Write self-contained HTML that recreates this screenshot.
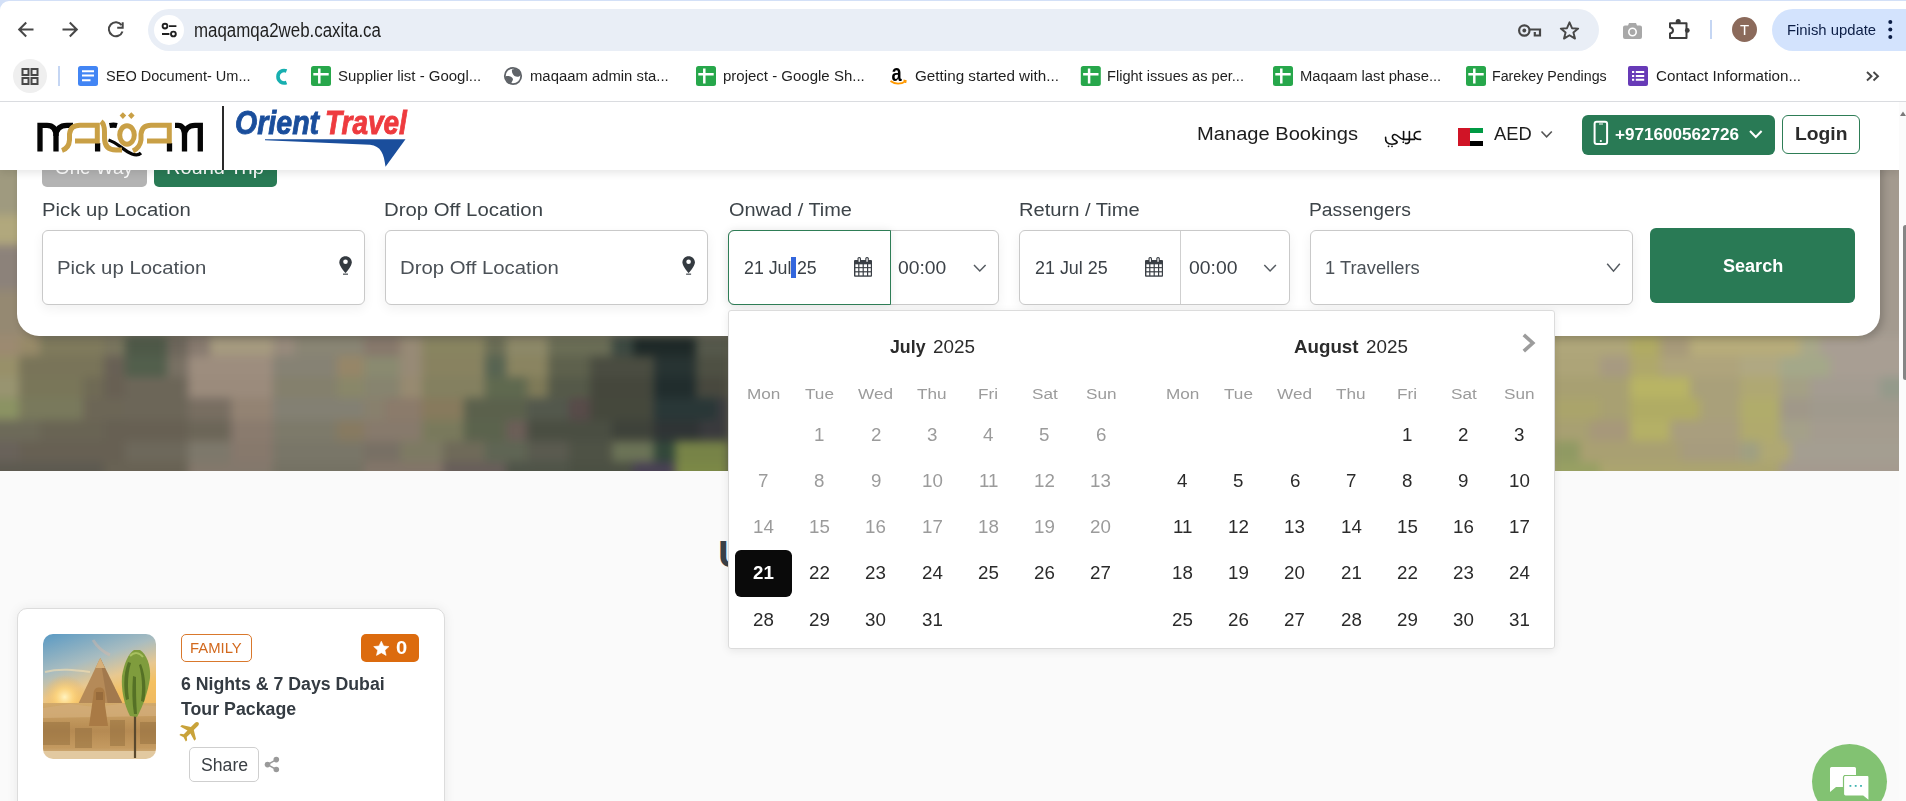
<!DOCTYPE html>
<html><head><meta charset="utf-8">
<style>
*{box-sizing:border-box;margin:0;padding:0}
html,body{width:1906px;height:801px;overflow:hidden;background:#fafafa;font-family:"Liberation Sans",sans-serif}
.a{position:absolute}
.t{position:absolute;line-height:0;white-space:nowrap;transform-origin:0 0;font-family:"Liberation Sans",sans-serif}
svg{position:absolute;overflow:visible}
</style></head><body>

<!-- ============ HERO IMAGE ============ -->
<div class="a" id="hero" style="left:0;top:102px;width:1899px;height:369px;overflow:hidden;background:#7d7560">
  <div class="a" style="left:0;top:0;width:1141px;height:369px;overflow:hidden">
  <div class="a" style="left:0;top:0;width:1899px;height:369px;filter:blur(5px) saturate(0.8)">
  <div class="a" style="left:-20px;top:0px;width:60px;height:113px;background:#a09a78"></div>
<div class="a" style="left:-20px;top:113px;width:60px;height:30px;background:#b4a872"></div>
<div class="a" style="left:-20px;top:143px;width:60px;height:45px;background:#8e8278"></div>
<div class="a" style="left:-20px;top:188px;width:60px;height:46px;background:#98896c"></div>
<div class="a" style="left:40px;top:0px;width:1101px;height:234px;background:#8a8470"></div>
<div class="a" style="left:1141px;top:0px;width:719px;height:234px;background:#b0a67a"></div>
<div class="a" style="left:1860px;top:0px;width:70px;height:234px;background:#a39a8e"></div>
<div class="a" style="left:-20px;top:234px;width:39px;height:20px;background:#a08a6a"></div>
<div class="a" style="left:19px;top:234px;width:21px;height:20px;background:#9a8a60"></div>
<div class="a" style="left:40px;top:234px;width:64px;height:20px;background:#807a55"></div>
<div class="a" style="left:104px;top:234px;width:21px;height:20px;background:#7a7558"></div>
<div class="a" style="left:125px;top:234px;width:42px;height:20px;background:#4c5a45"></div>
<div class="a" style="left:167px;top:234px;width:21px;height:20px;background:#6f6658"></div>
<div class="a" style="left:188px;top:234px;width:22px;height:20px;background:#8a7a6c"></div>
<div class="a" style="left:210px;top:234px;width:63px;height:20px;background:#a89a78"></div>
<div class="a" style="left:273px;top:234px;width:22px;height:20px;background:#9a8a78"></div>
<div class="a" style="left:295px;top:234px;width:69px;height:20px;background:#8a8570"></div>
<div class="a" style="left:364px;top:234px;width:36px;height:20px;background:#8a7868"></div>
<div class="a" style="left:400px;top:234px;width:22px;height:20px;background:#9a8a70"></div>
<div class="a" style="left:422px;top:234px;width:63px;height:20px;background:#8a8458"></div>
<div class="a" style="left:485px;top:234px;width:21px;height:20px;background:#6a6e50"></div>
<div class="a" style="left:506px;top:234px;width:42px;height:20px;background:#8e8860"></div>
<div class="a" style="left:548px;top:234px;width:64px;height:20px;background:#6a6e50"></div>
<div class="a" style="left:612px;top:234px;width:21px;height:20px;background:#3a4a40"></div>
<div class="a" style="left:633px;top:234px;width:63px;height:20px;background:#1c2a28"></div>
<div class="a" style="left:696px;top:234px;width:32px;height:20px;background:#555848"></div>
<div class="a" style="left:728px;top:234px;width:413px;height:20px;background:#5e5c4a"></div>
<div class="a" style="left:1141px;top:234px;width:413px;height:20px;background:#aaa274"></div>
<div class="a" style="left:1554px;top:234px;width:76px;height:20px;background:#b0a678"></div>
<div class="a" style="left:1630px;top:234px;width:30px;height:20px;background:#b0aa60"></div>
<div class="a" style="left:1660px;top:234px;width:30px;height:20px;background:#a89a78"></div>
<div class="a" style="left:1690px;top:234px;width:110px;height:20px;background:#b8ac78"></div>
<div class="a" style="left:1800px;top:234px;width:20px;height:20px;background:#a8a888"></div>
<div class="a" style="left:1820px;top:234px;width:110px;height:20px;background:#a89e92"></div>
<div class="a" style="left:-20px;top:254px;width:39px;height:21px;background:#9a9060"></div>
<div class="a" style="left:19px;top:254px;width:85px;height:21px;background:#7a7452"></div>
<div class="a" style="left:104px;top:254px;width:21px;height:21px;background:#6a6052"></div>
<div class="a" style="left:125px;top:254px;width:42px;height:21px;background:#506048"></div>
<div class="a" style="left:167px;top:254px;width:21px;height:21px;background:#7a7060"></div>
<div class="a" style="left:188px;top:254px;width:85px;height:21px;background:#a08c7a"></div>
<div class="a" style="left:273px;top:254px;width:64px;height:21px;background:#878270"></div>
<div class="a" style="left:337px;top:254px;width:27px;height:21px;background:#9a8660"></div>
<div class="a" style="left:364px;top:254px;width:36px;height:21px;background:#8a8a6a"></div>
<div class="a" style="left:400px;top:254px;width:22px;height:21px;background:#9a8a70"></div>
<div class="a" style="left:422px;top:254px;width:63px;height:21px;background:#8a8258"></div>
<div class="a" style="left:485px;top:254px;width:21px;height:21px;background:#55654e"></div>
<div class="a" style="left:506px;top:254px;width:42px;height:21px;background:#8c8458"></div>
<div class="a" style="left:548px;top:254px;width:42px;height:21px;background:#5e6248"></div>
<div class="a" style="left:590px;top:254px;width:64px;height:21px;background:#4a4c3e"></div>
<div class="a" style="left:654px;top:254px;width:42px;height:21px;background:#253432"></div>
<div class="a" style="left:696px;top:254px;width:32px;height:21px;background:#4e5040"></div>
<div class="a" style="left:728px;top:254px;width:413px;height:21px;background:#5e5c4a"></div>
<div class="a" style="left:1141px;top:254px;width:413px;height:21px;background:#aaa274"></div>
<div class="a" style="left:1554px;top:254px;width:46px;height:21px;background:#aea476"></div>
<div class="a" style="left:1600px;top:254px;width:30px;height:21px;background:#a89a80"></div>
<div class="a" style="left:1630px;top:254px;width:30px;height:21px;background:#b0a868"></div>
<div class="a" style="left:1660px;top:254px;width:80px;height:21px;background:#b0a47a"></div>
<div class="a" style="left:1740px;top:254px;width:40px;height:21px;background:#b0a880"></div>
<div class="a" style="left:1780px;top:254px;width:50px;height:21px;background:#a4a888"></div>
<div class="a" style="left:1830px;top:254px;width:100px;height:21px;background:#a89e92"></div>
<div class="a" style="left:-20px;top:275px;width:39px;height:21px;background:#9a9468"></div>
<div class="a" style="left:19px;top:275px;width:64px;height:21px;background:#7a7652"></div>
<div class="a" style="left:83px;top:275px;width:21px;height:21px;background:#706a50"></div>
<div class="a" style="left:104px;top:275px;width:21px;height:21px;background:#6a6050"></div>
<div class="a" style="left:125px;top:275px;width:63px;height:21px;background:#6e6655"></div>
<div class="a" style="left:188px;top:275px;width:85px;height:21px;background:#9e8a78"></div>
<div class="a" style="left:273px;top:275px;width:64px;height:21px;background:#858068"></div>
<div class="a" style="left:337px;top:275px;width:27px;height:21px;background:#8a8762"></div>
<div class="a" style="left:364px;top:275px;width:36px;height:21px;background:#88846a"></div>
<div class="a" style="left:400px;top:275px;width:22px;height:21px;background:#9a8a6a"></div>
<div class="a" style="left:422px;top:275px;width:63px;height:21px;background:#858058"></div>
<div class="a" style="left:485px;top:275px;width:42px;height:21px;background:#5e6a4a"></div>
<div class="a" style="left:527px;top:275px;width:21px;height:21px;background:#807a50"></div>
<div class="a" style="left:548px;top:275px;width:42px;height:21px;background:#555a45"></div>
<div class="a" style="left:590px;top:275px;width:64px;height:21px;background:#45473a"></div>
<div class="a" style="left:654px;top:275px;width:42px;height:21px;background:#1e2e2e"></div>
<div class="a" style="left:696px;top:275px;width:32px;height:21px;background:#48483c"></div>
<div class="a" style="left:728px;top:275px;width:413px;height:21px;background:#5e5c4a"></div>
<div class="a" style="left:1141px;top:275px;width:413px;height:21px;background:#aaa274"></div>
<div class="a" style="left:1554px;top:275px;width:76px;height:21px;background:#a8a070"></div>
<div class="a" style="left:1630px;top:275px;width:60px;height:21px;background:#b8b460"></div>
<div class="a" style="left:1690px;top:275px;width:50px;height:21px;background:#aaa078"></div>
<div class="a" style="left:1740px;top:275px;width:40px;height:21px;background:#b0a870"></div>
<div class="a" style="left:1780px;top:275px;width:30px;height:21px;background:#a4a084"></div>
<div class="a" style="left:1810px;top:275px;width:70px;height:21px;background:#a49c90"></div>
<div class="a" style="left:1880px;top:275px;width:50px;height:21px;background:#949a8a"></div>
<div class="a" style="left:-20px;top:296px;width:39px;height:22px;background:#8a9458"></div>
<div class="a" style="left:19px;top:296px;width:64px;height:22px;background:#7a7a55"></div>
<div class="a" style="left:83px;top:296px;width:42px;height:22px;background:#6e6652"></div>
<div class="a" style="left:125px;top:296px;width:63px;height:22px;background:#6e6655"></div>
<div class="a" style="left:188px;top:296px;width:43px;height:22px;background:#7a6e5e"></div>
<div class="a" style="left:231px;top:296px;width:42px;height:22px;background:#96826f"></div>
<div class="a" style="left:273px;top:296px;width:91px;height:22px;background:#848070"></div>
<div class="a" style="left:364px;top:296px;width:21px;height:22px;background:#8a8068"></div>
<div class="a" style="left:385px;top:296px;width:37px;height:22px;background:#8e7a66"></div>
<div class="a" style="left:422px;top:296px;width:42px;height:22px;background:#8a7a55"></div>
<div class="a" style="left:464px;top:296px;width:63px;height:22px;background:#5a6248"></div>
<div class="a" style="left:527px;top:296px;width:42px;height:22px;background:#52584a"></div>
<div class="a" style="left:569px;top:296px;width:21px;height:22px;background:#5a4a48"></div>
<div class="a" style="left:590px;top:296px;width:64px;height:22px;background:#45483a"></div>
<div class="a" style="left:654px;top:296px;width:63px;height:22px;background:#263838"></div>
<div class="a" style="left:717px;top:296px;width:11px;height:22px;background:#3a3a40"></div>
<div class="a" style="left:728px;top:296px;width:413px;height:22px;background:#5e5c4a"></div>
<div class="a" style="left:1141px;top:296px;width:413px;height:22px;background:#aaa274"></div>
<div class="a" style="left:1554px;top:296px;width:46px;height:22px;background:#aaa468"></div>
<div class="a" style="left:1600px;top:296px;width:30px;height:22px;background:#a8a070"></div>
<div class="a" style="left:1630px;top:296px;width:70px;height:22px;background:#b0ac60"></div>
<div class="a" style="left:1700px;top:296px;width:40px;height:22px;background:#aaa078"></div>
<div class="a" style="left:1740px;top:296px;width:40px;height:22px;background:#b0ac68"></div>
<div class="a" style="left:1780px;top:296px;width:30px;height:22px;background:#a09888"></div>
<div class="a" style="left:1810px;top:296px;width:120px;height:22px;background:#a09a8c"></div>
<div class="a" style="left:-20px;top:318px;width:60px;height:21px;background:#6e6a55"></div>
<div class="a" style="left:40px;top:318px;width:64px;height:21px;background:#6a6450"></div>
<div class="a" style="left:104px;top:318px;width:84px;height:21px;background:#686050"></div>
<div class="a" style="left:188px;top:318px;width:43px;height:21px;background:#6e6655"></div>
<div class="a" style="left:231px;top:318px;width:42px;height:21px;background:#8d7a6a"></div>
<div class="a" style="left:273px;top:318px;width:64px;height:21px;background:#7e7a66"></div>
<div class="a" style="left:337px;top:318px;width:27px;height:21px;background:#8a7a5a"></div>
<div class="a" style="left:364px;top:318px;width:58px;height:21px;background:#8a7a68"></div>
<div class="a" style="left:422px;top:318px;width:42px;height:21px;background:#7a7a55"></div>
<div class="a" style="left:464px;top:318px;width:42px;height:21px;background:#5a6448"></div>
<div class="a" style="left:506px;top:318px;width:21px;height:21px;background:#6e5e55"></div>
<div class="a" style="left:527px;top:318px;width:85px;height:21px;background:#4a4e40"></div>
<div class="a" style="left:612px;top:318px;width:42px;height:21px;background:#3e4238"></div>
<div class="a" style="left:654px;top:318px;width:46px;height:21px;background:#2e3436"></div>
<div class="a" style="left:700px;top:318px;width:28px;height:21px;background:#3a3a3e"></div>
<div class="a" style="left:728px;top:318px;width:413px;height:21px;background:#5e5c4a"></div>
<div class="a" style="left:1141px;top:318px;width:413px;height:21px;background:#aaa274"></div>
<div class="a" style="left:1554px;top:318px;width:36px;height:21px;background:#a8a070"></div>
<div class="a" style="left:1590px;top:318px;width:40px;height:21px;background:#a89878"></div>
<div class="a" style="left:1630px;top:318px;width:40px;height:21px;background:#b4b062"></div>
<div class="a" style="left:1670px;top:318px;width:70px;height:21px;background:#aa9e7c"></div>
<div class="a" style="left:1740px;top:318px;width:40px;height:21px;background:#b0aa6a"></div>
<div class="a" style="left:1780px;top:318px;width:30px;height:21px;background:#a4a088"></div>
<div class="a" style="left:1810px;top:318px;width:120px;height:21px;background:#a49c8e"></div>
<div class="a" style="left:-20px;top:339px;width:39px;height:21px;background:#6a6258"></div>
<div class="a" style="left:19px;top:339px;width:106px;height:21px;background:#686050"></div>
<div class="a" style="left:125px;top:339px;width:63px;height:21px;background:#6e6858"></div>
<div class="a" style="left:188px;top:339px;width:43px;height:21px;background:#7e7868"></div>
<div class="a" style="left:231px;top:339px;width:42px;height:21px;background:#8a7868"></div>
<div class="a" style="left:273px;top:339px;width:91px;height:21px;background:#7a7664"></div>
<div class="a" style="left:364px;top:339px;width:36px;height:21px;background:#7a7062"></div>
<div class="a" style="left:400px;top:339px;width:43px;height:21px;background:#7e7a5e"></div>
<div class="a" style="left:443px;top:339px;width:42px;height:21px;background:#706a55"></div>
<div class="a" style="left:485px;top:339px;width:42px;height:21px;background:#5e6650"></div>
<div class="a" style="left:527px;top:339px;width:42px;height:21px;background:#5a5a4c"></div>
<div class="a" style="left:569px;top:339px;width:43px;height:21px;background:#4e5242"></div>
<div class="a" style="left:612px;top:339px;width:42px;height:21px;background:#6a7450"></div>
<div class="a" style="left:654px;top:339px;width:21px;height:21px;background:#2e4838"></div>
<div class="a" style="left:675px;top:339px;width:53px;height:21px;background:#76853a"></div>
<div class="a" style="left:728px;top:339px;width:413px;height:21px;background:#5e5c4a"></div>
<div class="a" style="left:1141px;top:339px;width:413px;height:21px;background:#aaa274"></div>
<div class="a" style="left:1554px;top:339px;width:26px;height:21px;background:#909a60"></div>
<div class="a" style="left:1580px;top:339px;width:100px;height:21px;background:#aaa070"></div>
<div class="a" style="left:1680px;top:339px;width:60px;height:21px;background:#a89c7c"></div>
<div class="a" style="left:1740px;top:339px;width:20px;height:21px;background:#a0a080"></div>
<div class="a" style="left:1760px;top:339px;width:30px;height:21px;background:#b0a870"></div>
<div class="a" style="left:1790px;top:339px;width:140px;height:21px;background:#a49e90"></div>
<div class="a" style="left:-20px;top:360px;width:124px;height:38px;background:#5e5a4e"></div>
<div class="a" style="left:104px;top:360px;width:84px;height:38px;background:#6a6250"></div>
<div class="a" style="left:188px;top:360px;width:85px;height:38px;background:#857868"></div>
<div class="a" style="left:273px;top:360px;width:91px;height:38px;background:#767260"></div>
<div class="a" style="left:364px;top:360px;width:79px;height:38px;background:#857565"></div>
<div class="a" style="left:443px;top:360px;width:63px;height:38px;background:#6a5e58"></div>
<div class="a" style="left:506px;top:360px;width:63px;height:38px;background:#4e5446"></div>
<div class="a" style="left:569px;top:360px;width:64px;height:38px;background:#4a5040"></div>
<div class="a" style="left:633px;top:360px;width:42px;height:38px;background:#4a4058"></div>
<div class="a" style="left:675px;top:360px;width:53px;height:38px;background:#7a8a38"></div>
<div class="a" style="left:728px;top:360px;width:413px;height:38px;background:#5e5c4a"></div>
<div class="a" style="left:1141px;top:360px;width:413px;height:38px;background:#aaa274"></div>
<div class="a" style="left:1554px;top:360px;width:46px;height:38px;background:#98a060"></div>
<div class="a" style="left:1600px;top:360px;width:180px;height:38px;background:#aca46c"></div>
<div class="a" style="left:1780px;top:360px;width:150px;height:38px;background:#a49a8e"></div>
  </div></div>
  <div class="a" style="left:1141px;top:0;width:758px;height:369px;overflow:hidden">
  <div class="a" style="left:-1141px;top:0;width:1899px;height:369px;filter:blur(5px) saturate(0.95)">
  <div class="a" style="left:-20px;top:0px;width:60px;height:113px;background:#a09a78"></div>
<div class="a" style="left:-20px;top:113px;width:60px;height:30px;background:#b4a872"></div>
<div class="a" style="left:-20px;top:143px;width:60px;height:45px;background:#8e8278"></div>
<div class="a" style="left:-20px;top:188px;width:60px;height:46px;background:#98896c"></div>
<div class="a" style="left:40px;top:0px;width:1101px;height:234px;background:#8a8470"></div>
<div class="a" style="left:1141px;top:0px;width:719px;height:234px;background:#b0a67a"></div>
<div class="a" style="left:1860px;top:0px;width:70px;height:234px;background:#a39a8e"></div>
<div class="a" style="left:-20px;top:234px;width:39px;height:20px;background:#a08a6a"></div>
<div class="a" style="left:19px;top:234px;width:21px;height:20px;background:#9a8a60"></div>
<div class="a" style="left:40px;top:234px;width:64px;height:20px;background:#807a55"></div>
<div class="a" style="left:104px;top:234px;width:21px;height:20px;background:#7a7558"></div>
<div class="a" style="left:125px;top:234px;width:42px;height:20px;background:#4c5a45"></div>
<div class="a" style="left:167px;top:234px;width:21px;height:20px;background:#6f6658"></div>
<div class="a" style="left:188px;top:234px;width:22px;height:20px;background:#8a7a6c"></div>
<div class="a" style="left:210px;top:234px;width:63px;height:20px;background:#a89a78"></div>
<div class="a" style="left:273px;top:234px;width:22px;height:20px;background:#9a8a78"></div>
<div class="a" style="left:295px;top:234px;width:69px;height:20px;background:#8a8570"></div>
<div class="a" style="left:364px;top:234px;width:36px;height:20px;background:#8a7868"></div>
<div class="a" style="left:400px;top:234px;width:22px;height:20px;background:#9a8a70"></div>
<div class="a" style="left:422px;top:234px;width:63px;height:20px;background:#8a8458"></div>
<div class="a" style="left:485px;top:234px;width:21px;height:20px;background:#6a6e50"></div>
<div class="a" style="left:506px;top:234px;width:42px;height:20px;background:#8e8860"></div>
<div class="a" style="left:548px;top:234px;width:64px;height:20px;background:#6a6e50"></div>
<div class="a" style="left:612px;top:234px;width:21px;height:20px;background:#3a4a40"></div>
<div class="a" style="left:633px;top:234px;width:63px;height:20px;background:#1c2a28"></div>
<div class="a" style="left:696px;top:234px;width:32px;height:20px;background:#555848"></div>
<div class="a" style="left:728px;top:234px;width:413px;height:20px;background:#5e5c4a"></div>
<div class="a" style="left:1141px;top:234px;width:413px;height:20px;background:#aaa274"></div>
<div class="a" style="left:1554px;top:234px;width:76px;height:20px;background:#b0a678"></div>
<div class="a" style="left:1630px;top:234px;width:30px;height:20px;background:#b0aa60"></div>
<div class="a" style="left:1660px;top:234px;width:30px;height:20px;background:#a89a78"></div>
<div class="a" style="left:1690px;top:234px;width:110px;height:20px;background:#b8ac78"></div>
<div class="a" style="left:1800px;top:234px;width:20px;height:20px;background:#a8a888"></div>
<div class="a" style="left:1820px;top:234px;width:110px;height:20px;background:#a89e92"></div>
<div class="a" style="left:-20px;top:254px;width:39px;height:21px;background:#9a9060"></div>
<div class="a" style="left:19px;top:254px;width:85px;height:21px;background:#7a7452"></div>
<div class="a" style="left:104px;top:254px;width:21px;height:21px;background:#6a6052"></div>
<div class="a" style="left:125px;top:254px;width:42px;height:21px;background:#506048"></div>
<div class="a" style="left:167px;top:254px;width:21px;height:21px;background:#7a7060"></div>
<div class="a" style="left:188px;top:254px;width:85px;height:21px;background:#a08c7a"></div>
<div class="a" style="left:273px;top:254px;width:64px;height:21px;background:#878270"></div>
<div class="a" style="left:337px;top:254px;width:27px;height:21px;background:#9a8660"></div>
<div class="a" style="left:364px;top:254px;width:36px;height:21px;background:#8a8a6a"></div>
<div class="a" style="left:400px;top:254px;width:22px;height:21px;background:#9a8a70"></div>
<div class="a" style="left:422px;top:254px;width:63px;height:21px;background:#8a8258"></div>
<div class="a" style="left:485px;top:254px;width:21px;height:21px;background:#55654e"></div>
<div class="a" style="left:506px;top:254px;width:42px;height:21px;background:#8c8458"></div>
<div class="a" style="left:548px;top:254px;width:42px;height:21px;background:#5e6248"></div>
<div class="a" style="left:590px;top:254px;width:64px;height:21px;background:#4a4c3e"></div>
<div class="a" style="left:654px;top:254px;width:42px;height:21px;background:#253432"></div>
<div class="a" style="left:696px;top:254px;width:32px;height:21px;background:#4e5040"></div>
<div class="a" style="left:728px;top:254px;width:413px;height:21px;background:#5e5c4a"></div>
<div class="a" style="left:1141px;top:254px;width:413px;height:21px;background:#aaa274"></div>
<div class="a" style="left:1554px;top:254px;width:46px;height:21px;background:#aea476"></div>
<div class="a" style="left:1600px;top:254px;width:30px;height:21px;background:#a89a80"></div>
<div class="a" style="left:1630px;top:254px;width:30px;height:21px;background:#b0a868"></div>
<div class="a" style="left:1660px;top:254px;width:80px;height:21px;background:#b0a47a"></div>
<div class="a" style="left:1740px;top:254px;width:40px;height:21px;background:#b0a880"></div>
<div class="a" style="left:1780px;top:254px;width:50px;height:21px;background:#a4a888"></div>
<div class="a" style="left:1830px;top:254px;width:100px;height:21px;background:#a89e92"></div>
<div class="a" style="left:-20px;top:275px;width:39px;height:21px;background:#9a9468"></div>
<div class="a" style="left:19px;top:275px;width:64px;height:21px;background:#7a7652"></div>
<div class="a" style="left:83px;top:275px;width:21px;height:21px;background:#706a50"></div>
<div class="a" style="left:104px;top:275px;width:21px;height:21px;background:#6a6050"></div>
<div class="a" style="left:125px;top:275px;width:63px;height:21px;background:#6e6655"></div>
<div class="a" style="left:188px;top:275px;width:85px;height:21px;background:#9e8a78"></div>
<div class="a" style="left:273px;top:275px;width:64px;height:21px;background:#858068"></div>
<div class="a" style="left:337px;top:275px;width:27px;height:21px;background:#8a8762"></div>
<div class="a" style="left:364px;top:275px;width:36px;height:21px;background:#88846a"></div>
<div class="a" style="left:400px;top:275px;width:22px;height:21px;background:#9a8a6a"></div>
<div class="a" style="left:422px;top:275px;width:63px;height:21px;background:#858058"></div>
<div class="a" style="left:485px;top:275px;width:42px;height:21px;background:#5e6a4a"></div>
<div class="a" style="left:527px;top:275px;width:21px;height:21px;background:#807a50"></div>
<div class="a" style="left:548px;top:275px;width:42px;height:21px;background:#555a45"></div>
<div class="a" style="left:590px;top:275px;width:64px;height:21px;background:#45473a"></div>
<div class="a" style="left:654px;top:275px;width:42px;height:21px;background:#1e2e2e"></div>
<div class="a" style="left:696px;top:275px;width:32px;height:21px;background:#48483c"></div>
<div class="a" style="left:728px;top:275px;width:413px;height:21px;background:#5e5c4a"></div>
<div class="a" style="left:1141px;top:275px;width:413px;height:21px;background:#aaa274"></div>
<div class="a" style="left:1554px;top:275px;width:76px;height:21px;background:#a8a070"></div>
<div class="a" style="left:1630px;top:275px;width:60px;height:21px;background:#b8b460"></div>
<div class="a" style="left:1690px;top:275px;width:50px;height:21px;background:#aaa078"></div>
<div class="a" style="left:1740px;top:275px;width:40px;height:21px;background:#b0a870"></div>
<div class="a" style="left:1780px;top:275px;width:30px;height:21px;background:#a4a084"></div>
<div class="a" style="left:1810px;top:275px;width:70px;height:21px;background:#a49c90"></div>
<div class="a" style="left:1880px;top:275px;width:50px;height:21px;background:#949a8a"></div>
<div class="a" style="left:-20px;top:296px;width:39px;height:22px;background:#8a9458"></div>
<div class="a" style="left:19px;top:296px;width:64px;height:22px;background:#7a7a55"></div>
<div class="a" style="left:83px;top:296px;width:42px;height:22px;background:#6e6652"></div>
<div class="a" style="left:125px;top:296px;width:63px;height:22px;background:#6e6655"></div>
<div class="a" style="left:188px;top:296px;width:43px;height:22px;background:#7a6e5e"></div>
<div class="a" style="left:231px;top:296px;width:42px;height:22px;background:#96826f"></div>
<div class="a" style="left:273px;top:296px;width:91px;height:22px;background:#848070"></div>
<div class="a" style="left:364px;top:296px;width:21px;height:22px;background:#8a8068"></div>
<div class="a" style="left:385px;top:296px;width:37px;height:22px;background:#8e7a66"></div>
<div class="a" style="left:422px;top:296px;width:42px;height:22px;background:#8a7a55"></div>
<div class="a" style="left:464px;top:296px;width:63px;height:22px;background:#5a6248"></div>
<div class="a" style="left:527px;top:296px;width:42px;height:22px;background:#52584a"></div>
<div class="a" style="left:569px;top:296px;width:21px;height:22px;background:#5a4a48"></div>
<div class="a" style="left:590px;top:296px;width:64px;height:22px;background:#45483a"></div>
<div class="a" style="left:654px;top:296px;width:63px;height:22px;background:#263838"></div>
<div class="a" style="left:717px;top:296px;width:11px;height:22px;background:#3a3a40"></div>
<div class="a" style="left:728px;top:296px;width:413px;height:22px;background:#5e5c4a"></div>
<div class="a" style="left:1141px;top:296px;width:413px;height:22px;background:#aaa274"></div>
<div class="a" style="left:1554px;top:296px;width:46px;height:22px;background:#aaa468"></div>
<div class="a" style="left:1600px;top:296px;width:30px;height:22px;background:#a8a070"></div>
<div class="a" style="left:1630px;top:296px;width:70px;height:22px;background:#b0ac60"></div>
<div class="a" style="left:1700px;top:296px;width:40px;height:22px;background:#aaa078"></div>
<div class="a" style="left:1740px;top:296px;width:40px;height:22px;background:#b0ac68"></div>
<div class="a" style="left:1780px;top:296px;width:30px;height:22px;background:#a09888"></div>
<div class="a" style="left:1810px;top:296px;width:120px;height:22px;background:#a09a8c"></div>
<div class="a" style="left:-20px;top:318px;width:60px;height:21px;background:#6e6a55"></div>
<div class="a" style="left:40px;top:318px;width:64px;height:21px;background:#6a6450"></div>
<div class="a" style="left:104px;top:318px;width:84px;height:21px;background:#686050"></div>
<div class="a" style="left:188px;top:318px;width:43px;height:21px;background:#6e6655"></div>
<div class="a" style="left:231px;top:318px;width:42px;height:21px;background:#8d7a6a"></div>
<div class="a" style="left:273px;top:318px;width:64px;height:21px;background:#7e7a66"></div>
<div class="a" style="left:337px;top:318px;width:27px;height:21px;background:#8a7a5a"></div>
<div class="a" style="left:364px;top:318px;width:58px;height:21px;background:#8a7a68"></div>
<div class="a" style="left:422px;top:318px;width:42px;height:21px;background:#7a7a55"></div>
<div class="a" style="left:464px;top:318px;width:42px;height:21px;background:#5a6448"></div>
<div class="a" style="left:506px;top:318px;width:21px;height:21px;background:#6e5e55"></div>
<div class="a" style="left:527px;top:318px;width:85px;height:21px;background:#4a4e40"></div>
<div class="a" style="left:612px;top:318px;width:42px;height:21px;background:#3e4238"></div>
<div class="a" style="left:654px;top:318px;width:46px;height:21px;background:#2e3436"></div>
<div class="a" style="left:700px;top:318px;width:28px;height:21px;background:#3a3a3e"></div>
<div class="a" style="left:728px;top:318px;width:413px;height:21px;background:#5e5c4a"></div>
<div class="a" style="left:1141px;top:318px;width:413px;height:21px;background:#aaa274"></div>
<div class="a" style="left:1554px;top:318px;width:36px;height:21px;background:#a8a070"></div>
<div class="a" style="left:1590px;top:318px;width:40px;height:21px;background:#a89878"></div>
<div class="a" style="left:1630px;top:318px;width:40px;height:21px;background:#b4b062"></div>
<div class="a" style="left:1670px;top:318px;width:70px;height:21px;background:#aa9e7c"></div>
<div class="a" style="left:1740px;top:318px;width:40px;height:21px;background:#b0aa6a"></div>
<div class="a" style="left:1780px;top:318px;width:30px;height:21px;background:#a4a088"></div>
<div class="a" style="left:1810px;top:318px;width:120px;height:21px;background:#a49c8e"></div>
<div class="a" style="left:-20px;top:339px;width:39px;height:21px;background:#6a6258"></div>
<div class="a" style="left:19px;top:339px;width:106px;height:21px;background:#686050"></div>
<div class="a" style="left:125px;top:339px;width:63px;height:21px;background:#6e6858"></div>
<div class="a" style="left:188px;top:339px;width:43px;height:21px;background:#7e7868"></div>
<div class="a" style="left:231px;top:339px;width:42px;height:21px;background:#8a7868"></div>
<div class="a" style="left:273px;top:339px;width:91px;height:21px;background:#7a7664"></div>
<div class="a" style="left:364px;top:339px;width:36px;height:21px;background:#7a7062"></div>
<div class="a" style="left:400px;top:339px;width:43px;height:21px;background:#7e7a5e"></div>
<div class="a" style="left:443px;top:339px;width:42px;height:21px;background:#706a55"></div>
<div class="a" style="left:485px;top:339px;width:42px;height:21px;background:#5e6650"></div>
<div class="a" style="left:527px;top:339px;width:42px;height:21px;background:#5a5a4c"></div>
<div class="a" style="left:569px;top:339px;width:43px;height:21px;background:#4e5242"></div>
<div class="a" style="left:612px;top:339px;width:42px;height:21px;background:#6a7450"></div>
<div class="a" style="left:654px;top:339px;width:21px;height:21px;background:#2e4838"></div>
<div class="a" style="left:675px;top:339px;width:53px;height:21px;background:#76853a"></div>
<div class="a" style="left:728px;top:339px;width:413px;height:21px;background:#5e5c4a"></div>
<div class="a" style="left:1141px;top:339px;width:413px;height:21px;background:#aaa274"></div>
<div class="a" style="left:1554px;top:339px;width:26px;height:21px;background:#909a60"></div>
<div class="a" style="left:1580px;top:339px;width:100px;height:21px;background:#aaa070"></div>
<div class="a" style="left:1680px;top:339px;width:60px;height:21px;background:#a89c7c"></div>
<div class="a" style="left:1740px;top:339px;width:20px;height:21px;background:#a0a080"></div>
<div class="a" style="left:1760px;top:339px;width:30px;height:21px;background:#b0a870"></div>
<div class="a" style="left:1790px;top:339px;width:140px;height:21px;background:#a49e90"></div>
<div class="a" style="left:-20px;top:360px;width:124px;height:38px;background:#5e5a4e"></div>
<div class="a" style="left:104px;top:360px;width:84px;height:38px;background:#6a6250"></div>
<div class="a" style="left:188px;top:360px;width:85px;height:38px;background:#857868"></div>
<div class="a" style="left:273px;top:360px;width:91px;height:38px;background:#767260"></div>
<div class="a" style="left:364px;top:360px;width:79px;height:38px;background:#857565"></div>
<div class="a" style="left:443px;top:360px;width:63px;height:38px;background:#6a5e58"></div>
<div class="a" style="left:506px;top:360px;width:63px;height:38px;background:#4e5446"></div>
<div class="a" style="left:569px;top:360px;width:64px;height:38px;background:#4a5040"></div>
<div class="a" style="left:633px;top:360px;width:42px;height:38px;background:#4a4058"></div>
<div class="a" style="left:675px;top:360px;width:53px;height:38px;background:#7a8a38"></div>
<div class="a" style="left:728px;top:360px;width:413px;height:38px;background:#5e5c4a"></div>
<div class="a" style="left:1141px;top:360px;width:413px;height:38px;background:#aaa274"></div>
<div class="a" style="left:1554px;top:360px;width:46px;height:38px;background:#98a060"></div>
<div class="a" style="left:1600px;top:360px;width:180px;height:38px;background:#aca46c"></div>
<div class="a" style="left:1780px;top:360px;width:150px;height:38px;background:#a49a8e"></div>
  </div></div>
</div>

<!-- search card -->
<div class="a" style="left:17px;top:120px;width:1863px;height:216px;background:#fff;border-radius:0 0 22px 22px;box-shadow:3px 3px 8px rgba(0,0,0,.2)"></div>

<!-- one way / round trip -->
<div class="a" style="left:42px;top:150px;width:105px;height:37px;background:#b3b3b3;border-radius:5px"></div>
<div class="a" style="left:154px;top:150px;width:123px;height:37px;background:#297a55;border-radius:5px"></div>
<div class="t" style="left:55.20px;top:167.96px;font-size:18px;font-weight:400;color:#ffffff;transform:scaleX(1.0463);">One Way</div>
<div class="t" style="left:165.89px;top:167.96px;font-size:18px;font-weight:400;color:#ffffff;transform:scaleX(1.1103);">Round Trip</div>

<!-- inputs -->
<div class="a" style="left:42px;top:230px;width:323px;height:75px;border:1px solid #c9c9c9;border-radius:6px;background:#fff;box-shadow:0 4px 12px rgba(0,0,0,.06)"></div>
<div class="a" style="left:385px;top:230px;width:323px;height:75px;border:1px solid #c9c9c9;border-radius:6px;background:#fff;box-shadow:0 4px 12px rgba(0,0,0,.06)"></div>
<div class="a" style="left:728px;top:230px;width:271px;height:75px;border:1px solid #c9c9c9;border-radius:6px;background:#fff;box-shadow:0 4px 12px rgba(0,0,0,.06)"></div>
<div class="a" style="left:728px;top:230px;width:163px;height:75px;border:1px solid #2e7d56;border-radius:6px 0 0 6px;box-shadow:0 0 10px rgba(0,0,0,.08)"></div>
<div class="a" style="left:1019px;top:230px;width:271px;height:75px;border:1px solid #c9c9c9;border-radius:6px;background:#fff;box-shadow:0 4px 12px rgba(0,0,0,.06)"></div>
<div class="a" style="left:1180px;top:231px;width:1px;height:73px;background:#cfcfcf"></div>
<div class="a" style="left:1310px;top:230px;width:323px;height:75px;border:1px solid #c9c9c9;border-radius:6px;background:#fff;box-shadow:0 4px 12px rgba(0,0,0,.06)"></div>
<div class="a" style="left:1650px;top:228px;width:205px;height:75px;background:#297a55;border-radius:6px"></div>
<!-- cursor selection -->
<div class="a" style="left:791px;top:257px;width:5px;height:21px;background:#3366dd"></div>

<!-- ============ SITE HEADER ============ -->
<div class="a" style="left:0;top:102px;width:1899px;height:68px;background:#fff;box-shadow:0 3px 8px rgba(0,0,0,.10)"></div>
<div class="a" style="left:222px;top:106px;width:2px;height:64px;background:#2a2a2a"></div>
<div class="a" style="left:1582px;top:115px;width:193px;height:40px;background:#297a55;border-radius:6px"></div>
<div class="a" style="left:1782px;top:115px;width:78px;height:39px;border:1.5px solid #2e7d56;border-radius:6px;background:#fff"></div>
<!-- flag -->
<div class="a" style="left:1458px;top:128px;width:12px;height:18px;background:#d01426"></div>
<div class="a" style="left:1470px;top:128px;width:13px;height:5px;background:#009a44"></div>
<div class="a" style="left:1470px;top:141px;width:13px;height:5px;background:#000"></div>

<!-- ============ LOWER CONTENT ============ -->
<div class="a" style="left:17px;top:608px;width:428px;height:220px;border:1px solid #dcdcdc;border-radius:10px;background:#fff;box-shadow:0 0 12px rgba(0,0,0,.07)"></div>
<div class="a" style="left:181px;top:634px;width:71px;height:28px;border:1.5px solid #d9782c;border-radius:5px"></div>
<div class="a" style="left:361px;top:634px;width:58px;height:28px;background:#dc6b0e;border-radius:5px"></div>
<div class="a" style="left:189px;top:747px;width:70px;height:35px;border:1px solid #cfcfcf;border-radius:5px;background:#fff"></div>


<div class="t" style="left:718.27px;top:555.03px;font-size:36px;font-weight:700;color:#3a4147;transform:scaleX(1.1136);">U</div>
<!-- ============ CALENDAR ============ -->
<div class="a" style="left:728px;top:310px;width:827px;height:339px;background:#fff;border:1px solid #dcdcdc;border-radius:3px;box-shadow:0 2px 8px rgba(0,0,0,.08)"></div>
<div class="a" style="left:735px;top:550px;width:57px;height:47px;background:#0a0a0a;border-radius:6px"></div>

<!-- chat -->
<div class="a" style="left:1812px;top:744px;width:75px;height:75px;border-radius:50%;background:#82c272"></div>

<!-- ============ SCROLLBAR ============ -->
<div class="a" style="left:1899px;top:102px;width:7px;height:699px;background:#fbfbfb"></div>
<div class="a" style="left:1903px;top:225px;width:5px;height:155px;background:#858585;border-radius:3px"></div>

<!-- ============ CHROME TOP ============ -->
<div class="a" style="left:0;top:0;width:1906px;height:101px;background:#d3e0f7"></div>
<div class="a" style="left:0;top:1px;width:1906px;height:100px;background:#fff;border-radius:9px 0 0 0"></div>
<div class="a" style="left:0;top:0;width:1035px;height:1px;background:#d3e0f7"></div>
<div class="a" style="left:1252px;top:0;width:654px;height:1px;background:#d3e0f7"></div>
<div class="a" style="left:0;top:101px;width:1906px;height:1px;background:#dadce0"></div>
<div class="a" style="left:148px;top:9px;width:1451px;height:42px;background:#e9eef6;border-radius:21px"></div>
<div class="a" style="left:154px;top:15px;width:30px;height:30px;background:#fff;border-radius:50%"></div>
<div class="a" style="left:1772px;top:8.5px;width:160px;height:42px;background:#d3e3fd;border-radius:21px"></div>
<div class="a" style="left:13px;top:59px;width:34px;height:34px;background:#efefef;border-radius:50%"></div>
<div class="a" style="left:1732px;top:17px;width:25px;height:25px;background:#8b6a5b;border-radius:50%"></div>
<div class="a" style="left:1709.5px;top:20px;width:2px;height:19px;background:#c5d6f3"></div>
<div class="a" style="left:58px;top:66px;width:2px;height:20px;background:#c5d6f3"></div>

<svg width="1906" height="801" viewBox="0 0 1906 801" style="left:0;top:0;pointer-events:none">
<g fill="none" stroke="#474747" stroke-width="2" stroke-linecap="square">
  <path d="M32.5 29.5H19.5M25.5 23.2L19.2 29.5L25.5 35.8"/>
  <path d="M63.5 29.5H76.5M70.5 23.2L76.8 29.5L70.5 35.8"/>
  <path d="M121.6 25.2A7 7 0 1 0 122.5 31.5" stroke-linecap="butt"/>
  <path d="M122.7 22.2V27.8H117.2" stroke-linecap="butt"/>
</g>
<g fill="none" stroke="#1f1f1f" stroke-width="1.9">
  <circle cx="165" cy="26.1" r="2.4"/><path d="M169 26.1H176.4M162 34H169.4"/><circle cx="173.4" cy="34" r="2.4"/>
</g>
<g fill="none" stroke="#474747" stroke-width="2">
  <rect x="22.5" y="69" width="6" height="6"/><rect x="31.5" y="69" width="6" height="6"/>
  <rect x="22.5" y="78" width="6" height="6"/><rect x="31.5" y="78" width="6" height="6"/>
</g>
<!-- docs -->
<rect x="78" y="66" width="20" height="20" rx="2.5" fill="#4285f4"/>
<path d="M82 71.2H94M82 75.6H94M82 80.2H90.5" stroke="#fff" stroke-width="2"/>
<!-- C -->
<path d="M286.5 71A6.2 6.2 0 1 0 286.5 82.5" fill="none" stroke="#17afb0" stroke-width="3.6"/>
<!-- sheets -->
<g id="sh"><rect x="311" y="66" width="20" height="20" rx="2.5" fill="#27a74b"/><path d="M319.3 68.5V83.6M313.3 74.2H328.7" stroke="#fff" stroke-width="2.5"/></g>
<use href="#sh" x="385"/><use href="#sh" x="769.8"/><use href="#sh" x="962"/><use href="#sh" x="1155"/>
<!-- globe -->
<circle cx="513" cy="76" r="8.2" fill="none" stroke="#5f6368" stroke-width="1.8"/>
<path d="M512 69.5C515 68 520 69.5 521 74C520 77 517 77.5 514.5 76C513 74.5 511.5 72.5 512 69.5Z M505.5 76.5C508 75.5 512 76.5 513 79C513 81 511 82 511.5 84C508 83.5 505.5 80 505.5 76.5Z" fill="#5f6368"/>
<!-- amazon -->
<text x="0" y="0" transform="translate(891.6 80.6) scale(0.78 1)" font-family="Liberation Sans" font-weight="700" font-size="23.5" fill="#000">a</text>
<path d="M890.5 81C895 84.5 901 84.5 905.5 81.2" fill="none" stroke="#ff9900" stroke-width="1.8"/>
<path d="M903.5 80.2L906 80.8L905.6 83" fill="none" stroke="#ff9900" stroke-width="1.3"/>
<!-- forms -->
<rect x="1628" y="66" width="20" height="20" rx="2" fill="#673ab7"/>
<path d="M1632 72H1634.2M1632 76H1634.2M1632 79.8H1634.2M1635.8 72H1644.2M1635.8 76H1644.2M1635.8 79.8H1644.2" stroke="#fff" stroke-width="2.1"/>
<!-- chevrons >> -->
<path d="M1867 72L1871.5 76.2L1867 80.5M1873.5 72L1878 76.2L1873.5 80.5" fill="none" stroke="#474747" stroke-width="1.9"/>
<!-- key -->
<g fill="none" stroke="#474747" stroke-width="2.2">
 <circle cx="1524.3" cy="30.5" r="5.2"/>
 <path d="M1529.5 29.5H1540V35.5H1534.8V32"/>
</g>
<circle cx="1524.3" cy="30.5" r="1.9" fill="#474747"/>
<!-- star -->
<path d="M1569.5 22.3L1572 28.2L1578.2 28.6L1573.4 32.6L1575 38.6L1569.5 35.2L1564 38.6L1565.6 32.6L1560.8 28.6L1567 28.2Z" fill="none" stroke="#474747" stroke-width="1.9" stroke-linejoin="round"/>
<!-- camera -->
<path d="M1625 25.5H1628L1629 23H1636L1637 25.5H1640A2 2 0 0 1 1642 27.5V37A2 2 0 0 1 1640 39H1625A2 2 0 0 1 1623 37V27.5A2 2 0 0 1 1625 25.5Z" fill="#a8a8a8"/>
<circle cx="1632.5" cy="32" r="3.7" fill="none" stroke="#fff" stroke-width="1.6"/>
<!-- puzzle -->
<path d="M1670 23.2H1686.5V38H1670V33.5C1672 33 1673 32 1673 30.4C1673 28.8 1672 27.8 1670 27.3Z" fill="none" stroke="#3c3c3c" stroke-width="2" stroke-linejoin="round"/><circle cx="1678.2" cy="21.4" r="2.5" fill="#3c3c3c"/><circle cx="1687.3" cy="30.4" r="2.4" fill="#3c3c3c"/>
<!-- kebab -->
<circle cx="1890.3" cy="22" r="2" fill="#0b1d45"/><circle cx="1890.3" cy="29.6" r="2" fill="#0b1d45"/><circle cx="1890.3" cy="37" r="2" fill="#0b1d45"/>
<text x="1744.5" y="35" text-anchor="middle" font-family="Liberation Sans" font-size="15" fill="#fff">T</text>

<!-- ===== maqam logo ===== -->
<g fill="none" stroke="#050505" stroke-width="5.3">
  <path d="M40 151.5V125.3H47C53 125.3 56 129 56 136V151.5"/>
  <path d="M56 136C56 129 60 125.3 67 125.3H73"/>
  <path d="M97.6 143V151.5"/>
  <path d="M169.5 143V151.5"/>
  <path d="M109.5 125.5C112 125 115 125 117 125.5"/>
  <path d="M175 125.3H178C183 125.3 184.5 130 184.5 136V151.5M184.5 136C184.5 129 189 125.3 195 125.3H200.3V151.5"/>
</g>
<path d="M108.5 140C118 143 124 151 132 154C136 155.5 139 155 141 153" fill="none" stroke="#050505" stroke-width="3.2"/>
<g fill="none" stroke="#c9a046" stroke-width="5">
  <path d="M62 150.5Q69 148 69.5 140V134Q70.5 125.3 80 125.3H97.3V141H75"/>
  <path d="M101 121.5Q104.5 124 104.5 132V138Q104.5 150 116 150H122"/>
  <ellipse cx="127" cy="135" rx="7.3" ry="9.2"/>
  <path d="M133 151Q140 147.5 141 140V134Q142 125.3 151 125.3H169.3V141H147"/>
</g>
<path d="M122.9 112.2L126.2 115.6L122.9 119L119.6 115.6Z M131.3 112.2L134.6 115.6L131.3 119L128 115.6Z" fill="#c9a046"/>
<!-- orient swoosh -->
<path d="M265 139.2L405.5 139.2L385.5 166.8C384 154 381 146 370 144.8L265 140.2Z" fill="#1a4e9c"/>

<!-- arabic -->
<g fill="none" stroke="#111" stroke-width="1.6" stroke-linecap="round">
  <path d="M1420 131.6C1416 131.2 1414.2 133 1414.2 135.5C1414.2 138.3 1416.5 139.4 1420.6 139.4"/>
  <path d="M1403.6 139.4H1414.5"/>
  <path d="M1409.4 131.5V141C1409.4 143 1407.5 143.6 1405.5 143.4"/>
  <path d="M1403.6 131.5V139.4"/>
  <path d="M1403.6 139.4C1399 139.4 1398.5 134.5 1394.8 134.5C1391.5 134.5 1391.5 139 1395.5 140.5C1398.5 141.8 1397.5 144.2 1392 144.2C1387.5 144.2 1385.2 142 1385.6 137.2"/>
</g>
<circle cx="1403.3" cy="142.2" r="0.9" fill="#111"/><circle cx="1388.5" cy="146.3" r="0.9" fill="#111"/><circle cx="1392" cy="146.3" r="0.9" fill="#111"/>
<!-- AED chevron -->
<path d="M1541.5 131.5L1546.6 136.8L1551.8 131.5" fill="none" stroke="#555" stroke-width="1.6"/>
<!-- phone -->
<rect x="1594.6" y="121.7" width="12.5" height="22.2" rx="2" fill="none" stroke="#fff" stroke-width="2"/>
<path d="M1599 124H1603" stroke="#fff" stroke-width="1"/>
<circle cx="1600.85" cy="141" r="1.1" fill="#fff"/>
<path d="M1750 131L1755.8 137L1761.6 131" fill="none" stroke="#fff" stroke-width="2"/>

<!-- pins -->
<g id="pin" fill="#343a40">
  <path d="M345.5 256.3C342 256.3 339.3 259 339.3 262.6C339.3 266.6 345.5 273.2 345.5 273.2C345.5 273.2 351.8 266.6 351.8 262.6C351.8 259 349 256.3 345.5 256.3Z"/>
  <circle cx="345.5" cy="261.8" r="2.3" fill="#fff"/>
  <rect x="343" y="273.6" width="5" height="1.1"/>
</g>
<use href="#pin" x="343.1"/>
<!-- calendar icons -->
<g id="cal">
  <rect x="854" y="260" width="18" height="16.8" rx="1" fill="#3a3f45"/>
  <g fill="#fff">
    <rect x="855.4" y="264.3" width="2.8" height="2.8"/><rect x="859.4" y="264.3" width="3.2" height="2.8"/><rect x="863.8" y="264.3" width="3.2" height="2.8"/><rect x="868.2" y="264.3" width="2.6" height="2.8"/>
    <rect x="855.4" y="268.2" width="2.8" height="3"/><rect x="859.4" y="268.2" width="3.2" height="3"/><rect x="863.8" y="268.2" width="3.2" height="3"/><rect x="868.2" y="268.2" width="2.6" height="3"/>
    <rect x="855.4" y="272.4" width="2.8" height="3"/><rect x="859.4" y="272.4" width="3.2" height="3"/><rect x="863.8" y="272.4" width="3.2" height="3"/><rect x="868.2" y="272.4" width="2.6" height="3"/>
  </g>
  <rect x="857.5" y="257" width="3.5" height="5.5" rx="1.5" fill="#3a3f45"/><rect x="865.3" y="257" width="3.5" height="5.5" rx="1.5" fill="#3a3f45"/>
  <rect x="858.6" y="258.3" width="1.3" height="3.5" fill="#fff"/><rect x="866.4" y="258.3" width="1.3" height="3.5" fill="#fff"/>
</g>
<use href="#cal" x="291"/>
<!-- input chevrons -->
<g fill="none" stroke="#555b61" stroke-width="1.5">
  <path d="M974 265L979.8 271L985.6 265"/>
  <path d="M1264.3 265L1270.1 271L1275.9 265"/>
  <path d="M1607.2 263.8L1613.5 271.2L1619.8 263.8"/>
</g>
<!-- calendar next -->
<path d="M1523.8 334.8L1532.8 343L1523.8 351.2" fill="none" stroke="#9c9c9c" stroke-width="3.6"/>

<!-- card star -->
<path d="M381.3 641.2L383.6 646L388.9 646.6L384.9 650.2L386.1 655.4L381.3 652.7L376.5 655.4L377.7 650.2L373.7 646.6L379 646Z" fill="#fff" stroke="#fff" stroke-width="0.6" stroke-linejoin="round"/>
<!-- plane -->
<g transform="translate(190.3 730.6) rotate(45) scale(0.95)" fill="#c9a33a">
  <path d="M0 -12C1.5 -12 2.2 -10.5 2.2 -9V-3L10.5 2V4.5L2.2 2V7.5L4.8 9.5V11.5L0 10L-4.8 11.5V9.5L-2.2 7.5V2L-10.5 4.5V2L-2.2 -3V-9C-2.2 -10.5 -1.5 -12 0 -12Z"/>
</g>
<!-- share -->
<g fill="#9a9a9a"><circle cx="276.3" cy="759.6" r="2.8"/><circle cx="267.5" cy="764.6" r="2.8"/><circle cx="276.3" cy="769.5" r="2.8"/></g>
<path d="M276.3 759.6L267.5 764.6L276.3 769.5" fill="none" stroke="#9a9a9a" stroke-width="1.5"/>


<defs>
 <clipPath id="imgclip"><rect x="43" y="634" width="113" height="125" rx="10"/></clipPath>
 <linearGradient id="sky" x1="0" y1="0" x2="0.3" y2="1">
  <stop offset="0" stop-color="#5a9ac4"/><stop offset="0.3" stop-color="#a8bcc0"/><stop offset="0.48" stop-color="#e8c890"/><stop offset="0.62" stop-color="#f4c060"/><stop offset="1" stop-color="#e8b060"/>
 </linearGradient>
 <radialGradient id="sun" cx="0.5" cy="0.5" r="0.5">
  <stop offset="0" stop-color="#fff3c0"/><stop offset="0.4" stop-color="#ffd57a" stop-opacity="0.8"/><stop offset="1" stop-color="#f0b050" stop-opacity="0"/>
 </radialGradient>
 <linearGradient id="ground" x1="0" y1="0" x2="0" y2="1">
  <stop offset="0" stop-color="#d2aa6c"/><stop offset="0.5" stop-color="#b58a52"/><stop offset="0.8" stop-color="#c49a60"/><stop offset="1" stop-color="#dcc090"/>
 </linearGradient>
</defs>
<filter id="soft"><feGaussianBlur stdDeviation="0.5"/></filter>
<g clip-path="url(#imgclip)"><g filter="url(#soft)">
 <rect x="43" y="634" width="113" height="125" fill="url(#sky)"/>
 <path d="M93 640C98 648 103 652 110 655" stroke="#e8b8a0" stroke-width="3" opacity="0.35" fill="none"/>
 <path d="M45 672C60 668 75 670 90 672" stroke="#f6e0b0" stroke-width="2" opacity="0.6" fill="none"/>
 <circle cx="64.7" cy="697" r="22" fill="url(#sun)"/>
 <path d="M100.2 658L123.5 705.5H77.5Z" fill="#b58a58"/>
 <path d="M100.2 658L123.5 705.5H108Z" fill="#9a7248" opacity="0.7"/>
 <path d="M100.2 658L105 668H95.5Z" fill="#d6b07a"/>
 <rect x="43" y="703" width="113" height="56" fill="url(#ground)"/>
 <path d="M43 708L70 704L95 707L120 704L156 706V716L43 718Z" fill="#d2ad78" opacity="0.8"/>
 <path d="M93.5 695C93.5 689 96 687.5 99.5 687.5C103 687.5 105 690 105 696V705L108 726H89L92 705Z" fill="#a97a44"/>
 <path d="M96 692H103V700H96Z" fill="#8a6034" opacity="0.6"/>
 <path d="M43 722H70V745H43Z M75 728H92V748H75Z M110 720H125V746H110Z M140 722H156V744H140Z" fill="#8f6a3c" opacity="0.45"/>
 <rect x="43" y="751" width="113" height="8" fill="#e2c9a0"/>
 <path d="M135 758V712" stroke="#5a4a2e" stroke-width="2.2" fill="none"/>
 <path d="M134 650C128 654 124 664 122 676C121 690 124 704 130 716L137 717C143 706 148 692 150 678C151 664 146 654 140 650Z" fill="#7f9c3c"/>
 <g fill="#4e6a22" opacity="0.85">
  <path d="M128 662C124 672 123 686 126 700L129 699C127 686 128 672 131 663Z"/>
  <path d="M141 664C145 674 147 688 144 702L141 701C143 688 142 675 139 665Z"/>
  <path d="M133 676C132 690 132 702 134 714L137 714C136 702 136 690 136 677Z"/>
 </g>
 <path d="M130 656C134 652 139 652 143 657" stroke="#a8c060" stroke-width="2" fill="none"/>
</g></g>

<path d="M1900 116L1903 111.5L1906 116Z" fill="#7a7a7a"/>
<!-- chat -->
<path d="M1831.5 767H1854.5A1.5 1.5 0 0 1 1856 768.5V787H1836L1830 792V768.5A1.5 1.5 0 0 1 1831.5 767Z" fill="#fff"/>
<path d="M1844 775.5H1867.5A1.5 1.5 0 0 1 1869 777V801L1863 796H1845.5A2 2 0 0 1 1843.5 794V777.5A2 2 0 0 1 1845.5 775.5Z" fill="#fff" stroke="#82c272" stroke-width="1.2"/>
<g fill="#3fb3b0"><rect x="1849.5" y="785" width="1.8" height="1.8"/><rect x="1854.8" y="785" width="1.8" height="1.8"/><rect x="1860.1" y="785" width="1.8" height="1.8"/></g>
</svg>


<div class="t" style="left:194.43px;top:30.34px;font-size:19.5px;font-weight:400;color:#1f1f1f;transform:scaleX(0.8666);">maqamqa2web.caxita.ca</div>
<div class="t" style="left:105.70px;top:75.93px;font-size:15.5px;font-weight:400;color:#1f1f1f;transform:scaleX(0.9374);">SEO Document- Um...</div>
<div class="t" style="left:338.00px;top:75.93px;font-size:15.5px;font-weight:400;color:#1f1f1f;transform:scaleX(0.9669);">Supplier list - Googl...</div>
<div class="t" style="left:530.04px;top:75.93px;font-size:15.5px;font-weight:400;color:#1f1f1f;transform:scaleX(0.9584);">maqaam admin sta...</div>
<div class="t" style="left:722.53px;top:75.93px;font-size:15.5px;font-weight:400;color:#1f1f1f;transform:scaleX(0.9677);">project - Google Sh...</div>
<div class="t" style="left:915.00px;top:75.93px;font-size:15.5px;font-weight:400;color:#1f1f1f;transform:scaleX(0.9824);">Getting started with...</div>
<div class="t" style="left:1107.06px;top:75.93px;font-size:15.5px;font-weight:400;color:#1f1f1f;transform:scaleX(0.9408);">Flight issues as per...</div>
<div class="t" style="left:1299.55px;top:75.93px;font-size:15.5px;font-weight:400;color:#1f1f1f;transform:scaleX(0.9528);">Maqaam last phase...</div>
<div class="t" style="left:1492.08px;top:75.93px;font-size:15.5px;font-weight:400;color:#1f1f1f;transform:scaleX(0.9180);">Farekey Pendings</div>
<div class="t" style="left:1655.60px;top:75.93px;font-size:15.5px;font-weight:400;color:#1f1f1f;transform:scaleX(0.9791);">Contact Information...</div>
<div class="t" style="left:1786.51px;top:29.50px;font-size:15px;font-weight:400;color:#0b1d45;transform:scaleX(0.9897);">Finish update</div>
<div class="t" style="left:1197.38px;top:133.66px;font-size:18px;font-weight:400;color:#1c1c1c;transform:scaleX(1.1174);">Manage Bookings</div>
<div class="t" style="left:1494.30px;top:133.66px;font-size:18px;font-weight:400;color:#1c1c1c;transform:scaleX(1.0186);">AED</div>
<div class="t" style="left:1615.20px;top:134.35px;font-size:16.3px;font-weight:700;color:#ffffff;transform:scaleX(1.0499);">+971600562726</div>
<div class="t" style="left:1795.23px;top:133.76px;font-size:18px;font-weight:700;color:#2b2b2b;transform:scaleX(1.0705);">Login</div>
<div class="t" style="left:41.87px;top:210.36px;font-size:18px;font-weight:400;color:#3d4449;transform:scaleX(1.1271);">Pick up Location</div>
<div class="t" style="left:384.17px;top:210.36px;font-size:18px;font-weight:400;color:#3d4449;transform:scaleX(1.1295);">Drop Off Location</div>
<div class="t" style="left:728.60px;top:210.36px;font-size:18px;font-weight:400;color:#3d4449;transform:scaleX(1.1073);">Onwad / Time</div>
<div class="t" style="left:1018.68px;top:210.36px;font-size:18px;font-weight:400;color:#3d4449;transform:scaleX(1.1178);">Return / Time</div>
<div class="t" style="left:1309.43px;top:210.36px;font-size:18px;font-weight:400;color:#3d4449;transform:scaleX(1.0717);">Passengers</div>
<div class="t" style="left:57.44px;top:268.04px;font-size:17.5px;font-weight:400;color:#4b5157;transform:scaleX(1.1628);">Pick up Location</div>
<div class="t" style="left:400.44px;top:268.04px;font-size:17.5px;font-weight:400;color:#4b5157;transform:scaleX(1.1606);">Drop Off Location</div>
<div class="t" style="left:743.50px;top:267.54px;font-size:17.5px;font-weight:400;color:#3b4147;transform:scaleX(1.0151);">21 Jul</div>
<div class="t" style="left:796.80px;top:267.54px;font-size:17.5px;font-weight:400;color:#3b4147;transform:scaleX(1.0143);">25</div>
<div class="t" style="left:898.30px;top:267.54px;font-size:17.5px;font-weight:400;color:#3b4147;transform:scaleX(1.1030);">00:00</div>
<div class="t" style="left:1035.00px;top:267.54px;font-size:17.5px;font-weight:400;color:#3b4147;transform:scaleX(1.0229);">21 Jul 25</div>
<div class="t" style="left:1189.30px;top:267.54px;font-size:17.5px;font-weight:400;color:#3b4147;transform:scaleX(1.1053);">00:00</div>
<div class="t" style="left:1324.95px;top:267.74px;font-size:17.5px;font-weight:400;color:#4b5157;transform:scaleX(1.0465);">1 Travellers</div>
<div class="t" style="left:1722.80px;top:265.66px;font-size:18px;font-weight:700;color:#ffffff;transform:scaleX(1.0027);">Search</div>
<div class="t" style="left:890.20px;top:346.74px;font-size:17.5px;font-weight:700;color:#2b2b2b;transform:scaleX(1.0146);">July</div>
<div class="t" style="left:932.70px;top:346.74px;font-size:17.5px;font-weight:400;color:#2b2b2b;transform:scaleX(1.0786);">2025</div>
<div class="t" style="left:1294.30px;top:346.94px;font-size:17.5px;font-weight:700;color:#2b2b2b;transform:scaleX(1.0705);">August</div>
<div class="t" style="left:1366.00px;top:346.94px;font-size:17.5px;font-weight:400;color:#2b2b2b;transform:scaleX(1.0760);">2025</div>
<div class="t" style="left:746.61px;top:393.83px;font-size:15.2px;font-weight:400;color:#9b9b9b;transform:scaleX(1.13);">Mon</div>
<div class="t" style="left:1165.71px;top:393.83px;font-size:15.2px;font-weight:400;color:#9b9b9b;transform:scaleX(1.13);">Mon</div>
<div class="t" style="left:805.08px;top:393.83px;font-size:15.2px;font-weight:400;color:#9b9b9b;transform:scaleX(1.13);">Tue</div>
<div class="t" style="left:1224.13px;top:393.83px;font-size:15.2px;font-weight:400;color:#9b9b9b;transform:scaleX(1.13);">Tue</div>
<div class="t" style="left:858.31px;top:393.83px;font-size:15.2px;font-weight:400;color:#9b9b9b;transform:scaleX(1.13);">Wed</div>
<div class="t" style="left:1277.31px;top:393.83px;font-size:15.2px;font-weight:400;color:#9b9b9b;transform:scaleX(1.13);">Wed</div>
<div class="t" style="left:917.26px;top:393.83px;font-size:15.2px;font-weight:400;color:#9b9b9b;transform:scaleX(1.13);">Thu</div>
<div class="t" style="left:1336.21px;top:393.83px;font-size:15.2px;font-weight:400;color:#9b9b9b;transform:scaleX(1.13);">Thu</div>
<div class="t" style="left:978.29px;top:393.83px;font-size:15.2px;font-weight:400;color:#9b9b9b;transform:scaleX(1.13);">Fri</div>
<div class="t" style="left:1397.19px;top:393.83px;font-size:15.2px;font-weight:400;color:#9b9b9b;transform:scaleX(1.13);">Fri</div>
<div class="t" style="left:1031.67px;top:393.83px;font-size:15.2px;font-weight:400;color:#9b9b9b;transform:scaleX(1.13);">Sat</div>
<div class="t" style="left:1450.52px;top:393.83px;font-size:15.2px;font-weight:400;color:#9b9b9b;transform:scaleX(1.13);">Sat</div>
<div class="t" style="left:1085.53px;top:393.83px;font-size:15.2px;font-weight:400;color:#9b9b9b;transform:scaleX(1.13);">Sun</div>
<div class="t" style="left:1504.33px;top:393.83px;font-size:15.2px;font-weight:400;color:#9b9b9b;transform:scaleX(1.13);">Sun</div>
<div class="t" style="left:814.34px;top:434.84px;font-size:17.5px;font-weight:400;color:#9b9b9b;transform:scaleX(1.07);">1</div>
<div class="t" style="left:870.59px;top:434.84px;font-size:17.5px;font-weight:400;color:#9b9b9b;transform:scaleX(1.07);">2</div>
<div class="t" style="left:926.84px;top:434.84px;font-size:17.5px;font-weight:400;color:#9b9b9b;transform:scaleX(1.07);">3</div>
<div class="t" style="left:983.09px;top:434.84px;font-size:17.5px;font-weight:400;color:#9b9b9b;transform:scaleX(1.07);">4</div>
<div class="t" style="left:1039.34px;top:434.84px;font-size:17.5px;font-weight:400;color:#9b9b9b;transform:scaleX(1.07);">5</div>
<div class="t" style="left:1095.59px;top:434.84px;font-size:17.5px;font-weight:400;color:#9b9b9b;transform:scaleX(1.07);">6</div>
<div class="t" style="left:758.09px;top:480.94px;font-size:17.5px;font-weight:400;color:#9b9b9b;transform:scaleX(1.07);">7</div>
<div class="t" style="left:814.34px;top:480.94px;font-size:17.5px;font-weight:400;color:#9b9b9b;transform:scaleX(1.07);">8</div>
<div class="t" style="left:870.59px;top:480.94px;font-size:17.5px;font-weight:400;color:#9b9b9b;transform:scaleX(1.07);">9</div>
<div class="t" style="left:921.64px;top:480.94px;font-size:17.5px;font-weight:400;color:#9b9b9b;transform:scaleX(1.07);">10</div>
<div class="t" style="left:978.58px;top:480.94px;font-size:17.5px;font-weight:400;color:#9b9b9b;transform:scaleX(1.07);">11</div>
<div class="t" style="left:1034.14px;top:480.94px;font-size:17.5px;font-weight:400;color:#9b9b9b;transform:scaleX(1.07);">12</div>
<div class="t" style="left:1090.39px;top:480.94px;font-size:17.5px;font-weight:400;color:#9b9b9b;transform:scaleX(1.07);">13</div>
<div class="t" style="left:752.89px;top:527.04px;font-size:17.5px;font-weight:400;color:#9b9b9b;transform:scaleX(1.07);">14</div>
<div class="t" style="left:809.14px;top:527.04px;font-size:17.5px;font-weight:400;color:#9b9b9b;transform:scaleX(1.07);">15</div>
<div class="t" style="left:865.39px;top:527.04px;font-size:17.5px;font-weight:400;color:#9b9b9b;transform:scaleX(1.07);">16</div>
<div class="t" style="left:921.64px;top:527.04px;font-size:17.5px;font-weight:400;color:#9b9b9b;transform:scaleX(1.07);">17</div>
<div class="t" style="left:977.89px;top:527.04px;font-size:17.5px;font-weight:400;color:#9b9b9b;transform:scaleX(1.07);">18</div>
<div class="t" style="left:1034.14px;top:527.04px;font-size:17.5px;font-weight:400;color:#9b9b9b;transform:scaleX(1.07);">19</div>
<div class="t" style="left:1090.39px;top:527.04px;font-size:17.5px;font-weight:400;color:#9b9b9b;transform:scaleX(1.07);">20</div>
<div class="t" style="left:752.89px;top:573.04px;font-size:17.5px;font-weight:700;color:#ffffff;transform:scaleX(1.07);">21</div>
<div class="t" style="left:809.14px;top:573.04px;font-size:17.5px;font-weight:400;color:#2b2b2b;transform:scaleX(1.07);">22</div>
<div class="t" style="left:865.39px;top:573.04px;font-size:17.5px;font-weight:400;color:#2b2b2b;transform:scaleX(1.07);">23</div>
<div class="t" style="left:921.64px;top:573.04px;font-size:17.5px;font-weight:400;color:#2b2b2b;transform:scaleX(1.07);">24</div>
<div class="t" style="left:977.89px;top:573.04px;font-size:17.5px;font-weight:400;color:#2b2b2b;transform:scaleX(1.07);">25</div>
<div class="t" style="left:1034.14px;top:573.04px;font-size:17.5px;font-weight:400;color:#2b2b2b;transform:scaleX(1.07);">26</div>
<div class="t" style="left:1090.39px;top:573.04px;font-size:17.5px;font-weight:400;color:#2b2b2b;transform:scaleX(1.07);">27</div>
<div class="t" style="left:752.89px;top:619.94px;font-size:17.5px;font-weight:400;color:#2b2b2b;transform:scaleX(1.07);">28</div>
<div class="t" style="left:809.14px;top:619.94px;font-size:17.5px;font-weight:400;color:#2b2b2b;transform:scaleX(1.07);">29</div>
<div class="t" style="left:865.39px;top:619.94px;font-size:17.5px;font-weight:400;color:#2b2b2b;transform:scaleX(1.07);">30</div>
<div class="t" style="left:921.64px;top:619.94px;font-size:17.5px;font-weight:400;color:#2b2b2b;transform:scaleX(1.07);">31</div>
<div class="t" style="left:1401.99px;top:434.84px;font-size:17.5px;font-weight:400;color:#2b2b2b;transform:scaleX(1.07);">1</div>
<div class="t" style="left:1458.19px;top:434.84px;font-size:17.5px;font-weight:400;color:#2b2b2b;transform:scaleX(1.07);">2</div>
<div class="t" style="left:1514.39px;top:434.84px;font-size:17.5px;font-weight:400;color:#2b2b2b;transform:scaleX(1.07);">3</div>
<div class="t" style="left:1177.19px;top:480.94px;font-size:17.5px;font-weight:400;color:#2b2b2b;transform:scaleX(1.07);">4</div>
<div class="t" style="left:1233.39px;top:480.94px;font-size:17.5px;font-weight:400;color:#2b2b2b;transform:scaleX(1.07);">5</div>
<div class="t" style="left:1289.59px;top:480.94px;font-size:17.5px;font-weight:400;color:#2b2b2b;transform:scaleX(1.07);">6</div>
<div class="t" style="left:1345.79px;top:480.94px;font-size:17.5px;font-weight:400;color:#2b2b2b;transform:scaleX(1.07);">7</div>
<div class="t" style="left:1401.99px;top:480.94px;font-size:17.5px;font-weight:400;color:#2b2b2b;transform:scaleX(1.07);">8</div>
<div class="t" style="left:1458.19px;top:480.94px;font-size:17.5px;font-weight:400;color:#2b2b2b;transform:scaleX(1.07);">9</div>
<div class="t" style="left:1509.19px;top:480.94px;font-size:17.5px;font-weight:400;color:#2b2b2b;transform:scaleX(1.07);">10</div>
<div class="t" style="left:1172.68px;top:527.04px;font-size:17.5px;font-weight:400;color:#2b2b2b;transform:scaleX(1.07);">11</div>
<div class="t" style="left:1228.19px;top:527.04px;font-size:17.5px;font-weight:400;color:#2b2b2b;transform:scaleX(1.07);">12</div>
<div class="t" style="left:1284.39px;top:527.04px;font-size:17.5px;font-weight:400;color:#2b2b2b;transform:scaleX(1.07);">13</div>
<div class="t" style="left:1340.59px;top:527.04px;font-size:17.5px;font-weight:400;color:#2b2b2b;transform:scaleX(1.07);">14</div>
<div class="t" style="left:1396.79px;top:527.04px;font-size:17.5px;font-weight:400;color:#2b2b2b;transform:scaleX(1.07);">15</div>
<div class="t" style="left:1452.99px;top:527.04px;font-size:17.5px;font-weight:400;color:#2b2b2b;transform:scaleX(1.07);">16</div>
<div class="t" style="left:1509.19px;top:527.04px;font-size:17.5px;font-weight:400;color:#2b2b2b;transform:scaleX(1.07);">17</div>
<div class="t" style="left:1171.99px;top:573.04px;font-size:17.5px;font-weight:400;color:#2b2b2b;transform:scaleX(1.07);">18</div>
<div class="t" style="left:1228.19px;top:573.04px;font-size:17.5px;font-weight:400;color:#2b2b2b;transform:scaleX(1.07);">19</div>
<div class="t" style="left:1284.39px;top:573.04px;font-size:17.5px;font-weight:400;color:#2b2b2b;transform:scaleX(1.07);">20</div>
<div class="t" style="left:1340.59px;top:573.04px;font-size:17.5px;font-weight:400;color:#2b2b2b;transform:scaleX(1.07);">21</div>
<div class="t" style="left:1396.79px;top:573.04px;font-size:17.5px;font-weight:400;color:#2b2b2b;transform:scaleX(1.07);">22</div>
<div class="t" style="left:1452.99px;top:573.04px;font-size:17.5px;font-weight:400;color:#2b2b2b;transform:scaleX(1.07);">23</div>
<div class="t" style="left:1509.19px;top:573.04px;font-size:17.5px;font-weight:400;color:#2b2b2b;transform:scaleX(1.07);">24</div>
<div class="t" style="left:1171.99px;top:619.94px;font-size:17.5px;font-weight:400;color:#2b2b2b;transform:scaleX(1.07);">25</div>
<div class="t" style="left:1228.19px;top:619.94px;font-size:17.5px;font-weight:400;color:#2b2b2b;transform:scaleX(1.07);">26</div>
<div class="t" style="left:1284.39px;top:619.94px;font-size:17.5px;font-weight:400;color:#2b2b2b;transform:scaleX(1.07);">27</div>
<div class="t" style="left:1340.59px;top:619.94px;font-size:17.5px;font-weight:400;color:#2b2b2b;transform:scaleX(1.07);">28</div>
<div class="t" style="left:1396.79px;top:619.94px;font-size:17.5px;font-weight:400;color:#2b2b2b;transform:scaleX(1.07);">29</div>
<div class="t" style="left:1452.99px;top:619.94px;font-size:17.5px;font-weight:400;color:#2b2b2b;transform:scaleX(1.07);">30</div>
<div class="t" style="left:1509.19px;top:619.94px;font-size:17.5px;font-weight:400;color:#2b2b2b;transform:scaleX(1.07);">31</div>
<div class="t" style="left:189.98px;top:648.48px;font-size:14.5px;font-weight:400;color:#d2691e;transform:scaleX(1.0236);">FAMILY</div>
<div class="t" style="left:395.50px;top:647.74px;font-size:17.5px;font-weight:700;color:#ffffff;transform:scaleX(1.1500);">0</div>
<div class="t" style="left:181.00px;top:683.94px;font-size:17.5px;font-weight:700;color:#343b42;transform:scaleX(1.0118);">6 Nights & 7 Days Dubai</div>
<div class="t" style="left:181.00px;top:709.04px;font-size:17.5px;font-weight:700;color:#343b42;transform:scaleX(1.0146);">Tour Package</div>
<div class="t" style="left:200.70px;top:765.14px;font-size:17.5px;font-weight:400;color:#3a3f44;transform:scaleX(1.0095);">Share</div>
<div class="t" style="left:235.13px;top:122.57px;font-size:33px;font-weight:700;color:#1a4e9c;font-style:italic;transform:scaleX(0.8657);-webkit-text-stroke:0.9px #1a4e9c;">Orient</div>
<div class="t" style="left:325.11px;top:122.57px;font-size:33px;font-weight:700;color:#ee3b3f;font-style:italic;transform:scaleX(0.8464);-webkit-text-stroke:0.9px #ee3b3f;">Travel</div>
</body></html>
